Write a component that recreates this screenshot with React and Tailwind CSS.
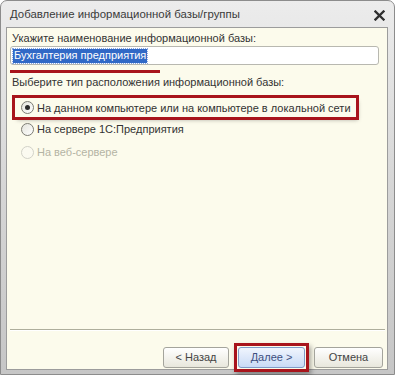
import React from "react";

function Radio({ checked, disabled }) {
  return (
    <span
      className={
        "relative inline-flex items-center justify-center w-[13px] h-[13px] rounded-full border shrink-0 " +
        (disabled
          ? "border-[#d2d2c8] bg-[#fbfaf0]"
          : "border-[#7c7c74] bg-gradient-to-br from-[#e4e4dc] to-[#ffffff]")
      }
    >
      {checked && <span className="w-[5px] h-[5px] rounded-full bg-[#2a2a2a]" />}
    </span>
  );
}

export default function App() {
  return (
    <div
      className="w-[395px] h-[375px] bg-white text-[11px] text-[#333333]"
      style={{ fontFamily: '"Liberation Sans", Arial, sans-serif' }}
    >
      <div className="w-[395px] h-[375px] rounded-t-[7px] border border-[#8c8c8c] bg-gradient-to-b from-[#ececec] via-[#d6d6d6] to-[#c6c6c6] flex flex-col">
        {/* title bar */}
        <div className="h-[26px] flex items-center pl-[9px] pr-[8px] shrink-0">
          <span className="text-[11.4px] text-[#3a3a3a] flex-1 pt-[2px] whitespace-nowrap">
            Добавление информационной базы/группы
          </span>
          <svg width="11" height="11" viewBox="0 0 11 11" className="mt-[3px] mr-[1px]">
            <path d="M1.5 1.5 L9.5 9.5 M9.5 1.5 L1.5 9.5" stroke="#2e2e2e" strokeWidth="2.3" strokeLinecap="square" />
          </svg>
        </div>
        {/* content */}
        <div className="flex-1 ml-[5px] mr-[6px] mb-[4px] border border-[#9c9c9c] bg-[#fcfbec] flex flex-col">
          <div className="pl-[5px] pt-[3px] h-[16px] leading-[14px] whitespace-nowrap">
            Укажите наименование информационной базы:
          </div>
          <div className="ml-[3px] mr-[8px] mt-[2px] h-[19px] rounded-[3px] border border-[#b8b8b0] bg-white flex items-center pl-[2px]">
            <span className="bg-[#3169c6] text-white leading-[13px] h-[14px] px-[1px] outline outline-1 outline-dotted outline-[#8aa8e0] whitespace-nowrap">
              Бухгалтерия предприятия
            </span>
          </div>
          <div className="ml-[3px] mt-[5px] w-[150px] h-[3px] bg-[#a8141c]" />
          <div className="pl-[5px] mt-[2px] h-[16px] leading-[14px] whitespace-nowrap">
            Выберите тип расположения информационной базы:
          </div>
          <div className="flex flex-col mt-[7px] pl-[8px]">
            <div className="h-[19px] w-[341px] flex items-center gap-[3px] pl-[6px] outline outline-[3px] outline-[#a8141c] shadow-[2px_3px_4px_rgba(0,0,0,0.3)]">
              <Radio checked />
              <span className="leading-[14px] whitespace-nowrap">На данном компьютере или на компьютере в локальной сети</span>
            </div>
            <div className="h-[22px] mt-[1px] flex items-center gap-[3px] pl-[6px]">
              <Radio />
              <span className="leading-[14px] whitespace-nowrap">На сервере 1С:Предприятия</span>
            </div>
            <div className="h-[24px] flex items-center gap-[3px] pl-[6px]">
              <Radio disabled />
              <span className="leading-[14px] text-[#b4b4a4] whitespace-nowrap">На веб-сервере</span>
            </div>
          </div>
          <div className="flex-1" />
          <div className="ml-[3px] mr-[2px] h-[2px] border-t border-[#aeae9c] border-b border-b-[#ffffff]" />
          <div className="flex justify-end items-center gap-[9px] pr-[4px] pt-[16px] pb-[1px]">
            <button className="w-[66px] h-[21px] rounded-[3px] border border-[#a4a49c] bg-gradient-to-b from-[#ffffff] to-[#e8e7dc] text-[#444]">
              &lt; Назад
            </button>
            <div className="-m-[4px] p-[1px] border-[3px] border-[#a8141c] shadow-[2px_3px_5px_rgba(0,0,0,0.35)] flex">
              <button className="w-[67px] h-[21px] rounded-[3px] border border-[#7f9cc8] bg-gradient-to-b from-[#f0f5fe] to-[#c9daf5] text-[#3d4f80]">
                Далее &gt;
              </button>
            </div>
            <button className="w-[69px] h-[21px] rounded-[3px] border border-[#a4a49c] bg-gradient-to-b from-[#ffffff] to-[#e8e7dc] text-[#444]">
              Отмена
            </button>
          </div>
        </div>
      </div>
    </div>
  );
}
